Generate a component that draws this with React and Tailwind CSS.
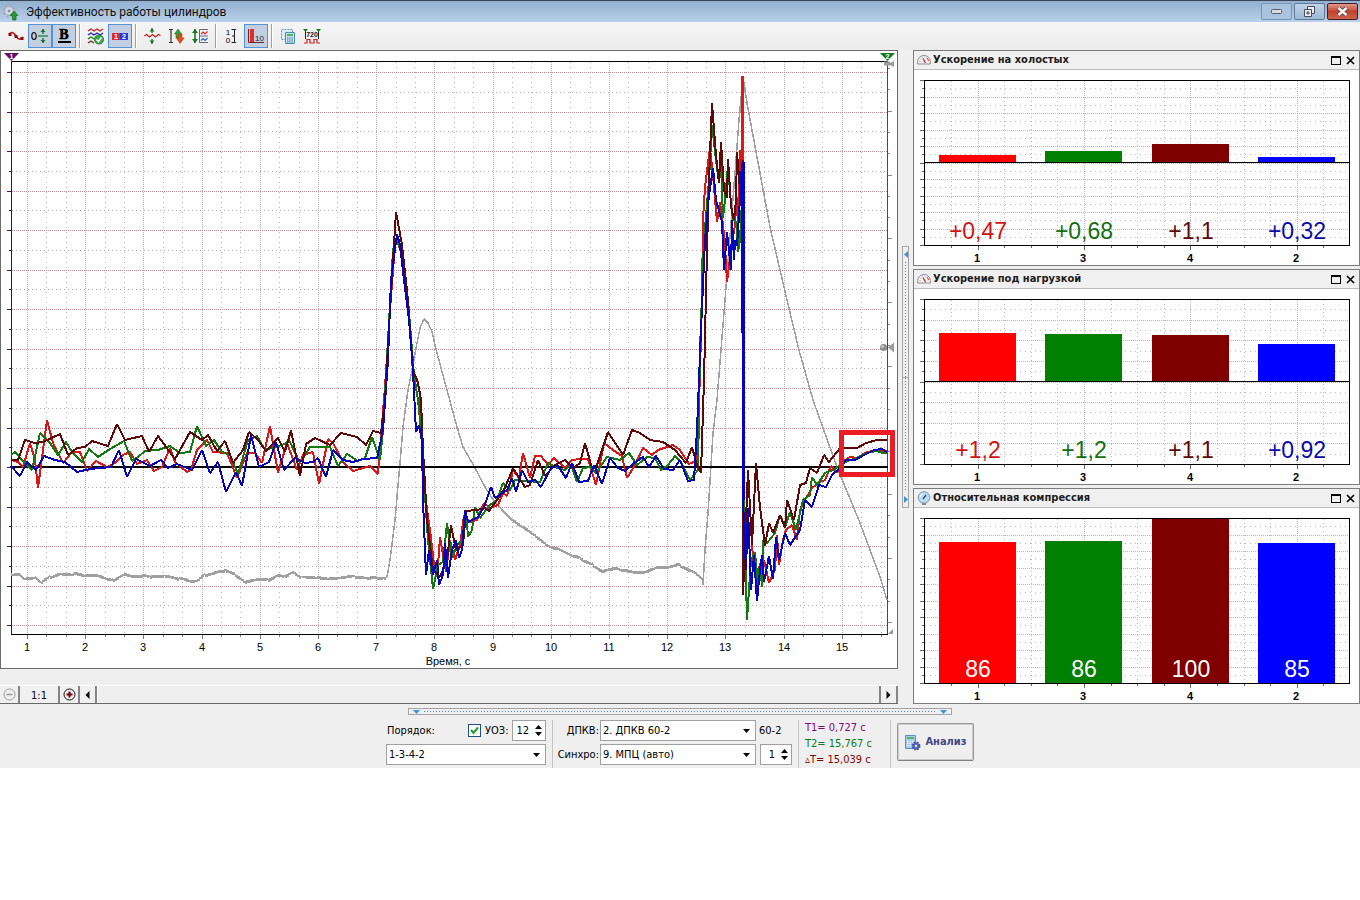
import { useState } from 'react';

const GRAY = '11,574 20,575 25,580 35,577 41,583 50,577 60,575 75,574 95,576 115,580 125,575 150,577 165,577 180,579 190,581 198,580 205,575 215,573 226,571 235,575 245,583 255,579 268,580 278,576 285,577 293,573 302,578 318,577 328,580 340,577 355,577 367,579 375,577 384,579 387,577 390,560 395,520 400,463 403,427 408,390 412,370 417,343 420,328 424,319 428,323 432,332 437,353 447,390 457,427 463,447 475,468 485,487 492,498 502,510 513,521 525,528 537,538 553,548 567,553 580,558 593,565 603,572 617,568 633,573 647,571 663,567 680,565 690,571 698,575 703,580 703,585 705,550 708,513 713,433 717,400 725,300 735,173 739,120 743,77 747,103 757,157 770,227 787,300 799,350 813,400 837,467 860,523 880,577 887,600';

const SERIES = [
  {
    color: '#dc1616',
    points: '11,460 18,462 23,467 30,443 35,460 38,488 47,420 53,443 63,463 72,452 80,452 87,471 96,461 107,467 115,463 123,455 130,452 137,464 147,460 154,471 162,467 170,448 175,462 187,472 191,470 197,450 207,440 213,452 227,453 237,478 247,453 255,453 262,463 270,426 278,473 287,443 297,470 303,455 313,452 319,484 328,439 333,443 343,462 353,471 370,466 378,474 385,387 390,310 395,245 397,240 402,255 408,300 412,350 413,382 417,378 420,395 423,470 427,510 430,530 435,572 438,565 440,537 444,560 446,572 450,540 455,560 460,545 464,515 470,522 477,520 484,503 490,508 498,505 503,493 507,496 513,470 519,478 523,453 530,478 535,456 541,456 548,465 554,458 565,468 572,460 580,459 588,459 596,485 604,443 613,450 622,456 627,478 635,465 643,448 652,455 658,450 673,445 680,450 689,464 696,461 698,440 702,300 703,220 705,187 710,148 713,175 717,222 720,202 723,225 725,245 727,282 731,250 735,225 736,187 738,225 740,150 742,220 742,76 743,100 743,470 745,560 751,523 753,560 757,570 764,560 769,583 775,570 777,535 779,565 783,540 786,530 792,525 797,540 800,510 805,500 812,488 820,482 825,480 831,466 837,472 845,460 850,457 857,458 865,453 875,450 887,451',
  },
  {
    color: '#107a10',
    points: '11,455 15,452 22,460 32,470 40,433 50,443 58,455 66,442 72,452 82,462 89,449 98,457 110,449 124,441 132,461 138,457 145,451 158,450 170,446 180,453 190,452 197,426 206,446 214,440 222,452 230,455 238,474 248,440 257,436 265,450 275,447 285,444 289,440 300,463 310,447 330,447 338,466 347,454 358,461 365,458 372,437 380,460 383,430 388,340 393,250 397,236 404,265 408,300 414,375 418,400 421,430 424,480 428,540 433,589 438,565 443,562 447,523 452,558 457,545 463,540 466,510 468,537 472,530 475,507 480,518 490,505 497,500 503,483 510,490 515,480 525,481 540,482 548,463 557,468 565,470 571,465 577,482 583,468 590,467 596,473 607,457 620,460 629,453 637,465 647,457 655,458 661,470 668,465 675,456 681,462 690,480 698,470 700,350 704,240 709,180 712,125 716,160 719,183 721,165 723,218 726,190 728,165 731,205 733,220 737,222 738,252 740,240 742,200 743,160 744,500 747,620 751,560 755,552 758,585 760,563 762,587 763,540 767,543 775,533 780,515 785,527 790,512 796,530 803,500 810,495 812,477 817,485 825,473 833,470 840,465 850,460 858,458 866,453 877,451 883,453 887,453',
  },
  {
    color: '#600808',
    points: '11,460 18,460 25,440 35,443 43,442 60,434 68,455 77,448 85,447 92,441 108,446 117,424 125,440 142,436 149,452 158,436 175,459 190,432 202,440 208,435 217,451 225,441 233,463 243,450 249,432 258,440 266,451 278,438 285,452 291,430 300,476 306,444 315,438 330,445 341,433 357,437 366,445 373,431 381,433 385,400 390,310 396,212 402,245 407,290 413,370 418,383 421,400 423,450 427,520 433,570 440,577 447,560 451,525 456,550 463,545 466,511 477,510 485,508 489,511 497,500 505,488 513,468 525,487 530,485 538,460 545,476 555,465 565,460 573,468 580,463 585,443 592,468 597,465 608,432 623,455 632,430 640,433 650,440 663,442 675,450 686,463 692,447 697,465 701,473 704,380 707,250 709,180 712,103 716,155 719,183 721,142 724,190 727,198 728,159 731,205 734,220 736,200 737,152 740,190 743,160 743,595 748,470 752,545 756,463 760,507 765,546 769,523 773,533 780,515 785,528 787,500 794,520 800,485 806,483 810,468 817,473 824,455 829,462 840,448 857,448 866,443 877,440 887,440',
  },
  {
    color: '#0404bc',
    points: '11,466 20,476 27,462 36,470 44,456 55,460 65,462 77,472 90,469 111,467 119,450 127,477 136,459 150,466 161,460 168,468 177,464 192,470 202,450 210,473 218,462 226,492 236,472 242,486 251,435 259,467 269,462 276,442 284,470 295,458 305,463 313,462 318,458 326,477 333,450 343,460 353,462 363,459 377,458 383,430 388,360 391,280 397,234 400,245 404,280 409,320 413,370 416,432 419,425 422,440 423,500 426,575 429,550 433,575 437,560 439,585 443,575 445,543 448,578 452,550 456,540 459,558 462,550 465,510 468,522 478,517 484,507 491,487 495,498 507,490 512,478 516,492 522,470 528,482 535,480 541,487 551,468 558,466 566,478 572,463 579,482 588,481 594,465 602,484 610,458 618,468 625,471 634,463 643,457 649,467 656,456 664,469 673,470 680,460 688,481 694,480 697,430 701,330 705,240 709,195 713,168 716,200 722,222 724,270 727,232 731,270 732,220 734,260 735,240 737,246 739,215 742,162 743,500 746,570 748,508 751,590 754,555 757,601 760,570 762,555 764,582 769,556 773,579 776,537 779,560 785,533 790,545 800,530 805,500 812,507 819,485 826,487 832,475 840,468 846,460 855,460 864,455 874,450 882,449 887,452',
  },
];

// rpm trace gets a small ripple on the slow parts
function ripple(points) {
  const pts = points.split(' ').map((p) => p.split(',').map(Number));
  const out = [];
  for (let i = 0; i < pts.length - 1; i++) {
    const [x0, y0] = pts[i];
    const [x1, y1] = pts[i + 1];
    const flat = Math.abs(y1 - y0) < (x1 - x0) * 0.9;
    const n = Math.max(1, x1 - x0);
    for (let k = 0; k < n; k++) {
      const wave = flat ? (k % 2 ? 1 : -1) * 1.8 * Math.abs(Math.sin((x0 + k) * 1.7)) : 0;
      out.push(`${x0 + ((x1 - x0) * k) / n},${y0 + ((y1 - y0) * k) / n + wave}`);
    }
  }
  out.push(pts[pts.length - 1].join(','));
  return out.join(' ');
}

const range = (n) => Array.from({ length: n }, (_, i) => i);

function MainChart() {
  return (
    <svg viewBox="1 51 896 617" className="block h-auto w-full" role="img" aria-label="Эффективность работы цилиндров" fontFamily="'Liberation Sans', Arial, sans-serif" fontSize="11">
      <g shapeRendering="crispEdges" fill="none">
        {range(45).map((i) => {
          const x = Math.round(27 + i * 19.4) + 0.5;
          const major = i % 3 === 0;
          return (
            <g key={i}>
              <path d={`M${x} 62V634`} stroke="#b4b4b4" strokeDasharray={major ? '1 1' : '1 4'} />
              <path d={`M${x} 635v${major ? 4 : 2}`} stroke="#777" />
            </g>
          );
        })}
        {range(29).map((i) => {
          const y = Math.round(72 + i * 19.75) + 0.5;
          const major = i % 2 === 0;
          return (
            <g key={i}>
              <path d={`M12 ${y}H887`} stroke={major ? '#c08a90' : '#b9a3a5'} strokeDasharray={major ? '1 1' : '1 3'} />
              <path d={`M${major ? 7 : 9} ${y}H11`} stroke="#4a1060" />
            </g>
          );
        })}
        {range(27).map((i) => {
          const y = Math.round(68 + i * 21.3) + 0.5;
          return <path key={i} d={`M888 ${y}h${i % 3 === 2 ? 4 : 2}`} stroke="#888" />;
        })}
        <path d="M11 61.500H888M11 634.500H888" stroke="#000" />
        <path d="M11.500 61V634" stroke="#4b0a5c" />
        <path d="M887.500 61V634" stroke="#127012" />
        <polyline points={ripple(GRAY)} stroke="#a0a0a0" strokeWidth="1.5" strokeLinejoin="bevel" />
        <path d="M12 467H888" stroke="#000" strokeWidth="2" />
        {SERIES.map((s) => (
          <polyline key={s.color} points={s.points} stroke={s.color} strokeWidth="2" strokeLinejoin="bevel" />
        ))}
        <path d="M742 76V160" stroke="#e01818" strokeWidth="3" />
        <path d="M743 162V500" stroke="#0404c0" strokeWidth="3" />
      </g>
      <rect x="841.500" y="432.500" width="51" height="42" fill="none" stroke="#ec1c24" strokeWidth="5" />

      {/* cursor flags */}
      <path d="M884 61.500h6v4h-6zM890 63l4-2v6l-4-2Z" fill="#999" />
      <path d="M4 53H19L11.500 61Z" fill="#5e1068" />
      <text x="11.500" y="59" fontSize="7" fontWeight="bold" fill="#fff" textAnchor="middle">1</text>
      <path d="M880 53H895L887.500 61Z" fill="#127a22" />
      <text x="887.500" y="59" fontSize="7" fontWeight="bold" fill="#fff" textAnchor="middle">2</text>
      <path d="M888 347.500L894 342.500V352.500Z" fill="#9b9b9b" />
      <circle cx="883.500" cy="347.500" r="3.500" fill="#8d8d8d" />
      <circle cx="882.500" cy="346.500" r="1.500" fill="#c9c9c9" />
      <path d="M888 634L893 629V634Z" fill="#9b9b9b" />

      {range(15).map((i) => (
        <text key={i} x={Math.round(27 + i * 58.2)} y="651" textAnchor="middle">{i + 1}</text>
      ))}
      <text x="448" y="665" textAnchor="middle">Время, с</text>
    </svg>
  );
}

const BAR_X = [25, 131, 238, 344];
const BAR_COLORS = ['#ff0000', '#008000', '#800000', '#0000ff'];
const TEXT_COLORS = ['#d01414', '#127012', '#5c0a0a', '#0a0aa8'];
const CYLINDERS = [1, 3, 4, 2];

function BarChart({ base, tops, values, rows, light, label }) {
  return (
    <svg viewBox="0 0 445 195" className="block h-auto w-full bg-white" role="img" aria-label={label} fontFamily="'Liberation Sans', Arial, sans-serif" textAnchor="middle">
      <g shapeRendering="crispEdges" fill="none">
        {range(15).map((i) => {
          const x = Math.round(37 + i * 26.6) + 0.5;
          const major = i % 4 === 1;
          return (
            <g key={i}>
              <path d={`M${x} 11V175`} stroke="#b8b8b8" strokeDasharray={major ? '1 1' : '1 3'} />
              <path d={`M${x} 176v${major ? 4 : 2}`} stroke="#666" />
            </g>
          );
        })}
        {range(rows + 1).map((i) => {
          const y = Math.round(10 + (i * 165) / rows) + 0.5;
          const major = i % 2 === 0;
          return (
            <g key={i}>
              <path d={`M11 ${y}H435`} stroke="#b8b8b8" strokeDasharray={major ? '1 1' : '1 4'} />
              <path d={`M${major ? 6 : 8} ${y}H10`} stroke="#666" />
            </g>
          );
        })}
        {BAR_X.map((x, i) => (
          <rect key={x} x={x} y={tops[i]} width="77" height={base - tops[i]} fill={BAR_COLORS[i]} />
        ))}
        <path d={`M10 ${base + 0.5}H435`} stroke="#000" />
        <rect x="10.500" y="10.500" width="425" height="165" stroke="#000" />
      </g>
      {BAR_X.map((x, i) => (
        <g key={x}>
          <text x={x + 39} y="169" fontSize="23" fill={light ? '#fff' : TEXT_COLORS[i]}>{values[i]}</text>
          <text x={x + 38} y="192" fontSize="11" fontWeight="bold">{CYLINDERS[i]}</text>
        </g>
      ))}
    </svg>
  );
}

function GaugeIcon({ round }) {
  if (round) {
    return (
      <svg width="14" height="14" viewBox="0 0 14 14" aria-hidden="true">
        <rect x="5" y="11" width="4" height="3" fill="#7c8790" />
        <circle cx="7" cy="6.500" r="5.800" fill="#b9dcf6" stroke="#7895ad" />
        <path d="M6 8L9 4" stroke="#345" strokeWidth="1.300" />
        <path d="M3 6a4 4 0 0 1 3-3" stroke="#fff" fill="none" />
      </svg>
    );
  }
  return (
    <svg width="14" height="14" viewBox="0 0 14 14" aria-hidden="true">
      <path d="M.7 11V8.500a6.300 6 0 0 1 12.600 0V11Z" fill="#f4f4f8" stroke="#8a8a94" />
      <path d="M3 9V8a4 4 0 0 1 8 0v1" stroke="#9aa6c8" strokeDasharray="1 1.500" fill="none" />
      <path d="M8.500 10L6 5.500" stroke="#d03c28" strokeWidth="1.500" />
      <path d="M10 5l2 3" stroke="#d03c28" />
    </svg>
  );
}

function Panel({ title, round, children }) {
  return (
    <section className="border border-[#7d7d7d] bg-white">
      <header className="flex h-[19px] items-center border-b border-[#bcbcbc] bg-[#f0f0f0] pl-[3px] pr-1">
        <GaugeIcon round={round} />
        <h2 className="ml-0.5 flex-1 whitespace-nowrap text-[11px] font-bold leading-4 text-[#1c1c1c]">{title}</h2>
        <button type="button" aria-label="Развернуть" className="mr-[5px]">
          <svg width="10" height="9" viewBox="0 0 10 9" className="block" shapeRendering="crispEdges"><path d="M.5 1V8.500H9.500V1" fill="none" stroke="#000" /><path d="M0 0H10V2H0Z" /></svg>
        </button>
        <button type="button" aria-label="Закрыть">
          <svg width="9" height="9" viewBox="0 0 9 9" className="block"><path d="M1 1L8 8M8 1L1 8" stroke="#000" strokeWidth="1.600" /></svg>
        </button>
      </header>
      {children}
    </section>
  );
}

function Tool({ label, pressed, children }) {
  return (
    <button
      type="button"
      aria-label={label}
      aria-pressed={!!pressed}
      className={pressed ? 'flex size-6 items-center justify-center border border-[#4f94d8] bg-[#c3cfe0]' : 'flex size-6 items-center justify-center'}
    >
      <svg width="18" height="18" viewBox="0 0 18 18" className="shrink-0" fill="none">{children}</svg>
    </button>
  );
}

function ToolSeparator() {
  return <div className="mx-[3px] h-6 w-0.5 border-l border-[#a0a0a0] bg-white" />;
}

function Toolbar() {
  return (
    <div className="flex h-7 items-center bg-linear-to-b from-[#f5f5f5] to-[#ececec] pl-1">
      <Tool label="Сглаживание">
        <path d="M2 7C5 4 7 6 9 9S13 14 16 10" stroke="#c01818" strokeWidth="1.500" />
        <path d="M1.500 6h3v3h-3zM7.500 8h3v3h-3zM13.500 10h3v3h-3z" fill="#8c0c0c" />
      </Tool>
      <Tool label="Ноль" pressed>
        <ellipse cx="3" cy="9" rx="2.200" ry="3.500" stroke="#111" strokeWidth="1.200" />
        <path d="M7 9H17" stroke="#127a22" strokeWidth="1.200" />
        <path d="M12 2V7M12 11V16" stroke="#127a22" strokeWidth="1.400" />
        <path d="M9.500 5L12 2l2.500 3ZM9.500 13L12 16l2.500-3Z" fill="#127a22" />
      </Tool>
      <Tool label="Жирные линии" pressed>
        <text x="9" y="12" fontFamily="'Liberation Serif', serif" fontSize="14" fontWeight="bold" fill="#000" stroke="#000" strokeWidth="0.600" textAnchor="middle">B</text>
        <path d="M3 15H16" stroke="#000" strokeWidth="2" />
      </Tool>
      <ToolSeparator />
      <Tool label="Выбор графиков">
        <path d="M1 4l3-2 3 2 3-2 3 2 3-2" stroke="#c22" strokeWidth="1.300" />
        <path d="M1 8l3-2 3 2 3-2 3 2 3-2" stroke="#22b" strokeWidth="1.300" />
        <path d="M1 12l3-2 3 2" stroke="#137a22" strokeWidth="1.300" />
        <path d="M1 16l3-2 3 2" stroke="#822" strokeWidth="1.300" />
        <circle cx="12" cy="12.500" r="4.500" fill="#3da64a" stroke="#23813a" />
        <path d="M9.500 12.500l2 2 3-4" stroke="#fff" strokeWidth="1.600" />
      </Tool>
      <Tool label="Номера цилиндров" pressed>
        <path d="M1 6h8v7H1z" fill="#d82a34" />
        <path d="M9 6h8v7H9z" fill="#2a3ad8" />
        <text x="5" y="12" fontFamily="'Liberation Sans'" fontSize="7" fontWeight="bold" fill="#fff" textAnchor="middle">1</text>
        <text x="13" y="12" fontFamily="'Liberation Sans'" fontSize="7" fontWeight="bold" fill="#fff" textAnchor="middle">2</text>
      </Tool>
      <ToolSeparator />
      <Tool label="Центрировать">
        <path d="M1.500 9l2-1.500 3 2.500 3-2.500 3 2.500 3-2.500 2 1" stroke="#c82020" strokeWidth="1.300" />
        <path d="M9 1V6M9 12V17" stroke="#127a22" strokeWidth="1.400" />
        <path d="M6.500 4.500L9 1.500l2.500 3ZM6.500 13.500L9 16.500l2.500-3Z" fill="#127a22" />
      </Tool>
      <Tool label="Масштаб по вертикали">
        <path d="M2 2.500H6M2 15.500H6M4 2.500V15.500" stroke="#333" strokeWidth="1.200" />
        <path d="M7.500 7L11 2l3.500 5H13v4H9V7Z" fill="#32a035" stroke="#1d7a25" strokeWidth=".6" />
        <path d="M9.500 11L13 16.500l4-5.500h-2V7h-3.500v4Z" fill="#e0521c" stroke="#a8330c" strokeWidth=".6" />
      </Tool>
      <Tool label="Автомасштаб">
        <path d="M4 2V16" stroke="#127a22" strokeWidth="1.600" />
        <path d="M1 6L4 2l3 4ZM1 12L4 16l3-4Z" fill="#127a22" />
        <path d="M17 2.500H8.500V15.500H17M8.500 9H17" stroke="#667" />
        <path d="M10 7l2-2 2 2 2.500-2.500" stroke="#d22" strokeWidth="1.200" />
        <path d="M10 13.500l2-2 2 2 2.500-2.500" stroke="#26c" strokeWidth="1.200" />
      </Tool>
      <ToolSeparator />
      <Tool label="Шкала">
        <text x="5" y="8" fontFamily="'Liberation Sans'" fontSize="8" fill="#000" textAnchor="middle">1</text>
        <text x="5" y="16" fontFamily="'Liberation Sans'" fontSize="8" fill="#000" textAnchor="middle">0</text>
        <path d="M8.500 2.500H13M8.500 15.500H13M11.500 2.500V15.500M9 9H11" stroke="#222" />
      </Tool>
      <Tool label="Столбцы" pressed>
        <path d="M3 2H7V15H3Z" fill="#e02c2c" />
        <path d="M1.500 2V15.500H17" stroke="#77222a" />
        <text x="12.500" y="14" fontFamily="'Liberation Sans'" fontSize="8" fill="#222" textAnchor="middle">10</text>
      </Tool>
      <ToolSeparator />
      <Tool label="Копировать">
        <path d="M2.500 2.500h11v10h-11z" fill="#dbeaf3" stroke="#6799af" strokeDasharray="2 1" />
        <path d="M6.500 5.500h9v11h-9z" fill="#c6e4ef" stroke="#4c8da8" />
        <path d="M8 7h6v2H8z" fill="#4caf64" />
        <path d="M8 11h6M8 13h6M8 15h6" stroke="#417ea0" strokeDasharray="1.500 .7" />
      </Tool>
      <Tool label="720 градусов">
        <path d="M1 16H4V12.500H7V16H11V12.500H14V16H17" stroke="#d22222" strokeWidth="1.200" />
        <path d="M2.500 3V12M15.500 3V12" stroke="#222" />
        <path d="M0 2h5L2.500 5ZM13 2h5l-2.500 3Z" fill="#117a22" />
        <text x="9" y="10" fontFamily="'Liberation Sans'" fontSize="7" fontWeight="bold" fill="#124" textAnchor="middle">720</text>
      </Tool>
    </div>
  );
}

function TitleBar() {
  return (
    <div className="flex h-[22px] items-center border-t border-[#39465a] bg-linear-to-b from-[#93b0d0] to-[#b9d1ea] px-0.5">
      <svg width="18" height="18" viewBox="0 0 18 18" aria-hidden="true">
        <circle cx="7" cy="8" r="5.500" fill="none" stroke="#a3abc0" strokeWidth="2.500" strokeDasharray="2.300 2" />
        <circle cx="7" cy="8" r="4.200" fill="#d9dde8" stroke="#a9b0c2" />
        <circle cx="7" cy="8" r="1.500" fill="#8793aa" />
        <path d="M8 12.500L12 8l4 4.500H14V17H10.500V12.500Z" fill="#27992f" stroke="#14701d" strokeWidth=".7" />
      </svg>
      <h1 className="ml-[6px] flex-1 font-['Roboto','DejaVu_Sans',sans-serif] text-[12px] leading-4 text-[#101010]">Эффективность работы цилиндров</h1>
      <div className="flex gap-0.5">
        <button type="button" aria-label="Свернуть" className="flex h-[17px] w-[31px] items-center justify-center rounded-xs border border-[#7795b8] bg-[#a9c3df]">
          <svg width="12" height="5" viewBox="0 0 12 5"><rect x=".5" y=".5" width="10" height="4" rx="1" fill="#ddd" stroke="#555e6c" /></svg>
        </button>
        <button type="button" aria-label="Восстановить" className="flex h-[17px] w-[31px] items-center justify-center rounded-xs border border-[#5e7897] bg-linear-to-b from-[#c0d3e8] to-[#9db9d8]">
          <svg width="13" height="12" viewBox="0 0 13 12" fill="#eee" stroke="#444e5c"><path d="M4.500 .5h7v7h-7z" /><path d="M1.500 3.500h7v7h-7z" /><path d="M4 6h2v2H4z" /></svg>
        </button>
        <button type="button" aria-label="Закрыть окно" className="flex h-[17px] w-[31px] items-center justify-center rounded-xs border border-[#451b24] bg-linear-to-b from-[#dc9a8e] via-[#c2402b] to-[#cb654c]">
          <svg width="13" height="11" viewBox="0 0 13 11"><path d="M2.500 2L10.500 9M10.500 2L2.500 9" stroke="#51484e" strokeWidth="4.200" /><path d="M2.500 2L10.500 9M10.500 2L2.500 9" stroke="#f4f4f4" strokeWidth="2.400" /></svg>
        </button>
      </div>
    </div>
  );
}

function ScrollRow() {
  const btn = 'flex h-[17px] items-center justify-center border-r-2 border-[#858585] bg-[#f0f0f0]';
  return (
    <div className="flex border-t border-b border-t-white border-b-[#696969]">
      <button type="button" aria-label="Уменьшить" className={`${btn} w-5`}>
        <svg width="13" height="13" viewBox="0 0 13 13"><circle cx="6.500" cy="6.500" r="5.500" fill="none" stroke="#999" /><path d="M3.500 6.500h6" stroke="#999" strokeWidth="1.500" /></svg>
      </button>
      <button type="button" className={`${btn} w-10 pt-0.5 text-[11px] leading-4`}>1:1</button>
      <button type="button" aria-label="Увеличить" className={`${btn} w-5`}>
        <svg width="13" height="13" viewBox="0 0 13 13"><circle cx="6.500" cy="6.500" r="5.500" fill="none" stroke="#111" /><path d="M3.500 6.500h6M6.500 3.500v6" stroke="#700" strokeWidth="2" /></svg>
      </button>
      <button type="button" aria-label="Влево" className={`${btn} w-[17px]`}>
        <svg width="5" height="8" viewBox="0 0 5 8"><path d="M4.500 0V8L.5 4Z" /></svg>
      </button>
      <div className="flex-1 border-l border-r-2 border-l-white border-r-[#858585]" />
      <button type="button" aria-label="Вправо" className={`${btn} w-[17px]`}>
        <svg width="5" height="8" viewBox="0 0 5 8"><path d="M.5 0V8L4.500 4Z" /></svg>
      </button>
    </div>
  );
}

function Select({ id, label, value }) {
  return (
    <div className="relative">
      <select id={id} aria-label={label} className="block h-[21px] w-full appearance-none border border-[#a0a0a0] bg-white pl-0.5 text-[11px] leading-4 text-black">
        <option>{value}</option>
      </select>
      <svg width="7" height="4" viewBox="0 0 7 4" className="pointer-events-none absolute right-[6px] top-[9px]"><path d="M0 0H7L3.500 4Z" /></svg>
    </div>
  );
}

function Spinner({ id, label, value, onChange }) {
  return (
    <div className="flex h-[21px] border border-[#a0a0a0] bg-white">
      <input id={id} aria-label={label} value={value} onChange={(e) => onChange(Number(e.target.value) || 0)} className="w-0 flex-1 text-right text-[11px] leading-4 outline-none" />
      <div className="ml-[5px] mr-0.5 flex w-[9px] flex-col items-center justify-evenly">
        <button type="button" aria-label="Больше" onClick={() => onChange(value + 1)}>
          <svg width="7" height="4" viewBox="0 0 7 4" className="block"><path d="M0 4H7L3.500 0Z" /></svg>
        </button>
        <button type="button" aria-label="Меньше" onClick={() => onChange(value - 1)}>
          <svg width="7" height="4" viewBox="0 0 7 4" className="block"><path d="M0 0H7L3.500 4Z" /></svg>
        </button>
      </div>
    </div>
  );
}

function Divider() {
  return <div className="mx-1.5 w-px bg-[#c4c4c4]" />;
}

function Controls() {
  const [advance, setAdvance] = useState(12);
  const [sync, setSync] = useState(1);
  const [useAdvance, setUseAdvance] = useState(true);

  return (
    <div className="mt-[5px] flex justify-center text-[11px] leading-4">
      <div className="grid w-40 gap-[3px] self-start">
        <div className="flex items-center">
          <label htmlFor="order" className="flex-1 pl-px">Порядок:</label>
          <input
            id="uoz"
            type="checkbox"
            checked={useAdvance}
            onChange={(e) => setUseAdvance(e.target.checked)}
            className="peer size-[13px] appearance-none border border-[#1c5180] bg-white"
          />
          <svg width="9" height="9" viewBox="0 0 9 9" className="pointer-events-none invisible -ml-[11px] mr-0.5 peer-checked:visible"><path d="M1 4L3.500 7 8 1.500" fill="none" stroke="#21a121" strokeWidth="2" /></svg>
          <label htmlFor="uoz" className="ml-1 w-[27px] whitespace-nowrap">УОЗ:</label>
          <div className="w-[34px]"><Spinner id="advance" label="УОЗ" value={advance} onChange={setAdvance} /></div>
        </div>
        <Select id="order" value="1-3-4-2" />
      </div>
      <Divider />
      <div className="grid grid-cols-[41px_156px_36px] items-center gap-y-[3px] self-start whitespace-nowrap">
        <label htmlFor="dpkv" className="justify-self-end pr-px">ДПКВ:</label>
        <Select id="dpkv" value="2. ДПКВ 60-2" />
        <span className="pl-[3px]">60-2</span>
        <label htmlFor="sync" className="justify-self-end pr-px">Синхро:</label>
        <Select id="sync" value="9. МПЦ (авто)" />
        <div className="pl-1">
          <Spinner id="syncNumber" label="Номер цилиндра" value={sync} onChange={setSync} />
        </div>
      </div>
      <Divider />
      <div className="w-[79px] whitespace-nowrap">
        <p className="text-[#7a0a82]">T1= 0,727 с</p>
        <p className="text-[#0a7d1a]">T2= 15,767 с</p>
        <p className="text-[#7a0808]">▵T= 15,039 с</p>
      </div>
      <Divider />
      <button type="button" className="mt-[3px] flex h-[38px] w-[77px] items-center justify-center gap-1 rounded-xs border border-[#999] border-b-[#808080] bg-[#efefef] font-bold text-[#434880] shadow-[inset_0_0_0_1px_#ccc]">
        <svg width="17" height="17" viewBox="0 0 17 17" aria-hidden="true">
          <path d="M1.500 1.500h10v13h-10z" fill="#a9cdec" stroke="#5b8fc0" />
          <path d="M3 3h7v2H3z" fill="#52b860" />
          <path d="M3 7.500h7M3 9.500h7M3 11.500h7" stroke="#fff" strokeDasharray="1.500 1" />
          <circle cx="12" cy="12" r="3.500" fill="#5b6ab8" stroke="#4452a0" strokeWidth="2" strokeDasharray="1.700 1.100" />
          <circle cx="12" cy="12" r="1.200" fill="#dfe3f5" />
        </svg>
        Анализ
      </button>
    </div>
  );
}

export default function App() {
  return (
    <div className="min-h-screen bg-white font-['DejaVu_Sans_Condensed','DejaVu_Sans',sans-serif] text-black">
      <main className="bg-[#efefef]">
        <TitleBar />
        <Toolbar />
        <div className="grid grid-cols-[898fr_15px_447fr]">
          <div className="flex min-w-0 flex-col justify-between">
            <div className="border border-[#6a6a6a] bg-white">
              <MainChart />
            </div>
            <ScrollRow />
          </div>
          <div className="flex items-center justify-center">
            <div className="flex h-[262px] w-[7px] flex-col items-center border border-[#a6a6a6] py-1">
              <svg width="4" height="7" viewBox="0 0 4 7"><path d="M4 0V7L0 3.500Z" fill="#3b94d8" /></svg>
              <div className="mt-1 w-px flex-1 bg-[repeating-linear-gradient(to_bottom,#4a90c8_0_1px,transparent_1px_3px)]" />
              <div className="h-px w-full bg-[#a6a6a6]" />
              <div className="mb-1 w-px flex-1 bg-[repeating-linear-gradient(to_bottom,#4a90c8_0_1px,transparent_1px_3px)]" />
              <svg width="4" height="7" viewBox="0 0 4 7"><path d="M0 0V7L4 3.500Z" fill="#3b94d8" /></svg>
            </div>
          </div>
          <div className="flex min-w-0 flex-col gap-[3px]">
            <Panel title="Ускорение на холостых">
              <BarChart label="Ускорение на холостых" base={92} rows={20} tops={[85, 81, 74, 87]} values={['+0,47', '+0,68', '+1,1', '+0,32']} />
            </Panel>
            <Panel title="Ускорение под нагрузкой">
              <BarChart label="Ускорение под нагрузкой" base={92} rows={16} tops={[44, 45, 46, 55]} values={['+1,2', '+1,2', '+1,1', '+0,92']} />
            </Panel>
            <Panel title="Относительная компрессия" round>
              <BarChart label="Относительная компрессия" base={175} rows={20} tops={[34, 33, 11, 35]} values={['86', '86', '100', '85']} light />
            </Panel>
          </div>
        </div>
        <div className="mx-auto mt-1 flex h-[7px] w-2/5 items-center justify-between border border-[#a6a6a6] px-1">
          <svg width="7" height="4" viewBox="0 0 7 4"><path d="M0 0H7L3.500 4Z" fill="#3b94d8" /></svg>
          <div className="mx-1 h-px flex-1 bg-[repeating-linear-gradient(to_right,#4a90c8_0_1px,transparent_1px_3px)]" />
          <svg width="7" height="4" viewBox="0 0 7 4"><path d="M0 0H7L3.500 4Z" fill="#3b94d8" /></svg>
        </div>
        <Controls />
      </main>
    </div>
  );
}
